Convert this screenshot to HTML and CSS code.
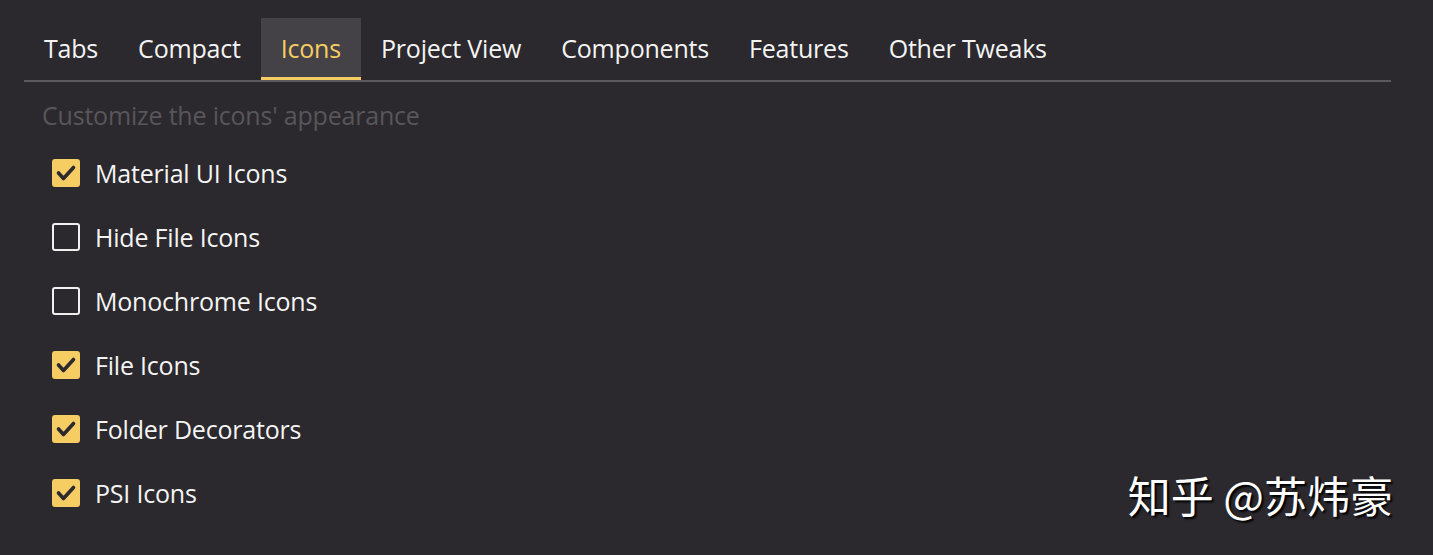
FILE: index.html
```html
<!DOCTYPE html>
<html lang="en">
<head>
<meta charset="utf-8">
<link rel="stylesheet" href="styles.css">
</head>
<body>
<div class="page">
  <nav class="tabs">
    <div class="tab">Tabs</div>
    <div class="tab">Compact</div>
    <div class="tab active">Icons</div>
    <div class="tab">Project View</div>
    <div class="tab">Components</div>
    <div class="tab">Features</div>
    <div class="tab">Other Tweaks</div>
  </nav>
  <p class="hint">Customize the icons' appearance</p>
  <ul class="options">
    <li class="option"><span class="box checked"><svg viewBox="0 0 28 28" width="28" height="28"><path d="M6.5 14 L11.5 19.5 L21.5 8.5" fill="none" stroke="#2b292d" stroke-width="3.6" stroke-linecap="round" stroke-linejoin="round"/></svg></span>Material UI Icons</li>
    <li class="option"><span class="box"></span>Hide File Icons</li>
    <li class="option"><span class="box"></span>Monochrome Icons</li>
    <li class="option"><span class="box checked"><svg viewBox="0 0 28 28" width="28" height="28"><path d="M6.5 14 L11.5 19.5 L21.5 8.5" fill="none" stroke="#2b292d" stroke-width="3.6" stroke-linecap="round" stroke-linejoin="round"/></svg></span>File Icons</li>
    <li class="option"><span class="box checked"><svg viewBox="0 0 28 28" width="28" height="28"><path d="M6.5 14 L11.5 19.5 L21.5 8.5" fill="none" stroke="#2b292d" stroke-width="3.6" stroke-linecap="round" stroke-linejoin="round"/></svg></span>Folder Decorators</li>
    <li class="option"><span class="box checked"><svg viewBox="0 0 28 28" width="28" height="28"><path d="M6.5 14 L11.5 19.5 L21.5 8.5" fill="none" stroke="#2b292d" stroke-width="3.6" stroke-linecap="round" stroke-linejoin="round"/></svg></span>PSI Icons</li>
  </ul>
  <div class="watermark">知乎 @苏炜豪</div>
</div>
</body>
</html>
```
FILE: styles.css
```css
html, body {
  margin: 0;
  padding: 0;
  background: #2b292d;
}
body {
  font-family: "Open Sans", "Noto Sans", sans-serif;
  color: #f2f2f2;
  width: 1433px;
  height: 555px;
  overflow: hidden;
}
.page {
  position: relative;
  height: 555px;
  padding: 18px 42px 0 24px;
  box-sizing: border-box;
}
.tabs {
  display: flex;
  border-bottom: 2px solid #5b595d;
  height: 62px;
}
.tab {
  padding: 0 20px;
  font-size: 25px;
  line-height: 61px;
  height: 59px;
  letter-spacing: -0.2px;
  color: #f4f4f4;
  border-bottom: 3px solid transparent;
}
.tab.active {
  background: #444246;
  color: #f6cd63;
  border-bottom-color: #f6cd63;
}
.hint {
  margin: 16px 0 0 18px;
  font-size: 25px;
  line-height: 34px;
  color: #58565a;
  letter-spacing: -0.2px;
}
.options {
  list-style: none;
  margin: 23px 0 0 28px;
  padding: 0;
  display: flex;
  flex-direction: column;
  gap: 28px;
}
.option {
  display: flex;
  align-items: center;
  gap: 15px;
  height: 36px;
  font-size: 25px;
  letter-spacing: -0.2px;
  color: #f4f4f4;
}
.box {
  width: 28px;
  height: 28px;
  box-sizing: border-box;
  border: 2px solid #f0f0f0;
  border-radius: 3px;
  flex: none;
  position: relative;
}
.box.checked {
  background: #f6cd63;
  border-color: #f6cd63;
}
.box svg {
  position: absolute;
  left: -2px;
  top: -2px;
}
.watermark {
  position: absolute;
  right: 40px;
  top: 463px;
  font-family: "Noto Sans CJK SC", sans-serif;
  font-size: 43px;
  font-weight: 400;
  color: #ffffff;
  text-shadow: 2px 2px 2px #000;
  letter-spacing: 0;
}
```
